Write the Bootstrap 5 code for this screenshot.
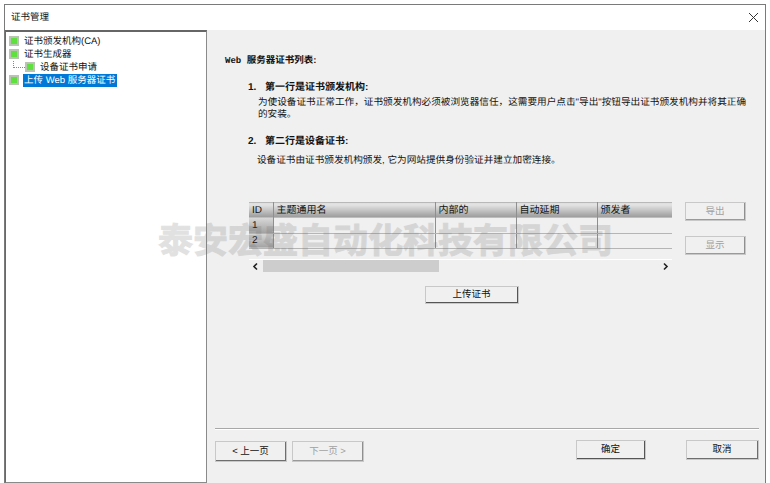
<!DOCTYPE html>
<html lang="zh-CN">
<head>
  <meta charset="UTF-8">
  <meta name="viewport" content="width=device-width, initial-scale=1">
  <title>证书管理</title>
  <link href="https://cdn.jsdelivr.net/npm/bootstrap@5.3.3/dist/css/bootstrap.min.css" rel="stylesheet">
  <style>
    html, body { height: 483px; overflow: hidden; }
    body {
      background: #fff;
      color: #111;
      font-family: "Liberation Sans", "Noto Sans CJK SC", sans-serif;
      font-size: 9.5px;
      line-height: 12px;
      padding: 4px 4px 0 4px;
      text-rendering: geometricPrecision;
    }
    .dlg-frame {
      position: relative;
      height: 479px;
      border: 1px solid #7a7a7a;
      border-bottom: 0;
    }
    .dlg-title { height: 25px; padding: 2px 6px 0; }
    .dlg-close { width: 11px; height: 11px; margin-top: -1px; }
    .dlg-body { height: 454px; }
    .tree-pane {
      width: 202px;
      flex: none;
      border: 1px solid #8a8a8a;
      border-left-color: #696969;
      border-top: 2px solid #666;
      padding-top: 3px;
      padding-left: 3px;
    }
    .tree-row { height: 13px; }
    .tree-row.sub { padding-left: 4px; }
    .tree-icon {
      width: 10px; height: 10px; flex: none;
      background: #5fe03f;
      border: 2px solid #b9c4b2;
      margin: 0 5px 0 0;
    }
    .tree-link {
      width: 12px; height: 7px; flex: none;
      margin-top: -6px;
      border-left: 1px dotted #888;
      border-bottom: 1px dotted #888;
    }
    .tree-txt { padding-top: 2px; white-space: nowrap; }
    .tree-sel { background: #0078d7; color: #fff; padding: 1px 0 0 1px; margin-left: -1px; width: 94px; height: 13px; white-space: nowrap; }
    .right-pane {
      flex: 1;
      background: #f0f0f0;
      padding: 25px 7px 0 18px;
      min-width: 0;
    }
    .sec-head { font-weight: 700; height: 12px; }
    .web-word { font-family: "Liberation Mono", monospace; font-size: 9px; margin-right: 3px; }
    .step-head { font-weight: 700; font-size: 10px; margin: 15px 0 0 23px; height: 12px; }
    .step-num { display: inline-block; width: 17px; }
    .step-text { margin: 3px 0 0 33px; white-space: nowrap; font-size: 9.65px; }
    .step-text.gap-big { margin: 7px 0 0 32px; }
    .cert-row { margin-top: 35px; height: 53px; margin-left: 24px; }
    .cert-table {
      width: 423px;
      height: 47px;
      table-layout: fixed;
      border-collapse: collapse;
      border-bottom: 1px solid #b5b5b5;
      font-size: 10px;
    }
    .cert-table th {
      height: 16px;
      font-weight: 400;
      padding: 0 3px;
      background: linear-gradient(#dcdcdc, #e4e4e4 15%, #9a9a9a);
      border-right: 1px solid #8f8f8f;
      border-top: 1px solid #b8b8b8;
    }
    .cert-table td {
      height: 15px;
      padding: 0 3px;
      background: #f0f0f0;
      border-right: 1px solid #8f8f8f;
      border-bottom: 1px solid #b5b5b5;
    }
    .cert-table tr > :last-child { border-right: 0; }
    .cert-table td.row-id { background: linear-gradient(#d8d8d8, #a2a2a2); }
    .w-id { width: 24px; }
    .w-name { width: 162px; }
    .w-mid { width: 81px; }
    .side-btns { margin-left: 13px; gap: 15px; }
    .win-btn {
      display: block;
      background: #f0f0f0;
      border: 1px solid #f4f4f4;
      border-right: 2px solid #6e6e6e;
      border-bottom: 2px solid #6e6e6e;
      outline: 1px solid #c8c8c8;
      outline-offset: -1px;
      border-radius: 0;
      color: #111;
      font-size: 9.5px;
      line-height: 12px;
      padding: 0;
      text-align: center;
    }
    .win-btn:disabled { color: #a0a0a0; border-right-color: #8f8f8f; border-bottom-color: #9a9a9a; opacity: 1; }
    .btn-side { width: 61px; height: 19px; }
    .scroll-strip {
      width: 423px;
      height: 14px;
      margin: 4px 0 0 24px;
      border-top: 1px solid #fff;
    }
    .scroll-arrow { width: 14px; height: 13px; flex: none; }
    .scroll-track { flex: 1; }
    .scroll-thumb { width: 176px; height: 12px; background: #cdcdcd; }
    .upload-wrap { margin-top: 13px; padding-left: 200px; }
    .btn-upload { width: 94px; height: 18px; border-right-color: #555; border-bottom-color: #555; }
    .dlg-sep { border-top: 1px solid #a8a8a8; border-bottom: 1px solid #fff; margin: 124px 0 0 -10px; width: 544px; }
    .foot-row { margin: 11px 0 0 -10px; width: 544px; }
    .btn-page { width: 72px; height: 21px; }
    .btn-page + .btn-page { margin-left: 5px; }
    .btn-ok { width: 70px; height: 20px; margin-top: -1px; border: 1px solid #555; border-right-width: 2px; border-bottom-width: 2px; }
    .btn-cancel { width: 73px; height: 20px; margin-top: -1px; margin-left: 40px; }
    .watermark {
      position: absolute;
      left: 153px;
      top: 215px;
      font-family: "Noto Sans CJK SC", sans-serif;
      font-size: 35px;
      line-height: 38px;
      font-weight: 700;
      color: #6e6e6e;
      -webkit-text-stroke: 1px #6e6e6e;
      opacity: .2;
      white-space: nowrap;
      pointer-events: none;
    }
  </style>
</head>
<body>
  <div class="dlg-frame d-flex flex-column">
    <div class="dlg-title d-flex align-items-center justify-content-between">
      <span>证书管理</span>
      <svg class="dlg-close" viewBox="0 0 11 11"><path d="M1 1l9 9M10 1l-9 9" stroke="#333" stroke-width="1" fill="none"/></svg>
    </div>
    <div class="dlg-body d-flex">
      <div class="tree-pane">
        <div class="tree-row d-flex align-items-center"><span class="tree-icon"></span><span class="tree-txt">证书颁发机构(CA)</span></div>
        <div class="tree-row d-flex align-items-center"><span class="tree-icon"></span><span class="tree-txt">证书生成器</span></div>
        <div class="tree-row sub d-flex align-items-center"><span class="tree-link"></span><span class="tree-icon"></span><span class="tree-txt">设备证书申请</span></div>
        <div class="tree-row d-flex align-items-center"><span class="tree-icon"></span><span class="tree-sel">上传 Web 服务器证书</span></div>
      </div>
      <div class="right-pane">
        <div class="sec-head"><span class="web-word">Web</span> 服务器证书列表:</div>
        <div class="step-head"><span class="step-num">1.</span>第一行是证书颁发机构:</div>
        <div class="step-text">为使设备证书正常工作&#xFF0C;证书颁发机构必须被浏览器信任&#xFF0C;这需要用户点击"导出"按钮导出证书颁发机构并将其正确<br>的安装。</div>
        <div class="step-head"><span class="step-num">2.</span>第二行是设备证书:</div>
        <div class="step-text gap-big">设备证书由证书颁发机构颁发, 它为网站提供身份验证并建立加密连接。</div>
        <div class="cert-row d-flex">
          <table class="cert-table">
            <colgroup><col class="w-id"><col class="w-name"><col class="w-mid"><col class="w-mid"><col></colgroup>
            <thead><tr><th>ID</th><th>主题通用名</th><th>内部的</th><th>自动延期</th><th>颁发者</th></tr></thead>
            <tbody>
              <tr><td class="row-id">1</td><td></td><td></td><td></td><td></td></tr>
              <tr><td class="row-id">2</td><td></td><td></td><td></td><td></td></tr>
            </tbody>
          </table>
          <div class="side-btns d-flex flex-column">
            <button type="button" class="win-btn btn-side" disabled>导出</button>
            <button type="button" class="win-btn btn-side" disabled>显示</button>
          </div>
        </div>
        <div class="scroll-strip d-flex align-items-center">
          <svg class="scroll-arrow" viewBox="0 0 14 13"><path d="M8 3.5L5 6.5l3 3" stroke="#222" stroke-width="1.6" fill="none"/></svg>
          <div class="scroll-track"><div class="scroll-thumb"></div></div>
          <svg class="scroll-arrow" viewBox="0 0 14 13"><path d="M6 3.5l3 3-3 3" stroke="#222" stroke-width="1.6" fill="none"/></svg>
        </div>
        <div class="upload-wrap">
          <button type="button" class="win-btn btn-upload">上传证书</button>
        </div>
        <div class="dlg-sep"></div>
        <div class="foot-row d-flex">
          <button type="button" class="win-btn btn-page">&lt; 上一页</button>
          <button type="button" class="win-btn btn-page" disabled>下一页 &gt;</button>
          <button type="button" class="win-btn btn-ok ms-auto">确定</button>
          <button type="button" class="win-btn btn-cancel">取消</button>
        </div>
      </div>
    </div>
    <div class="watermark">泰安宏盛自动化科技有限公司</div>
  </div>
  <script src="https://cdn.jsdelivr.net/npm/bootstrap@5.3.3/dist/js/bootstrap.bundle.min.js"></script>
</body>
</html>
